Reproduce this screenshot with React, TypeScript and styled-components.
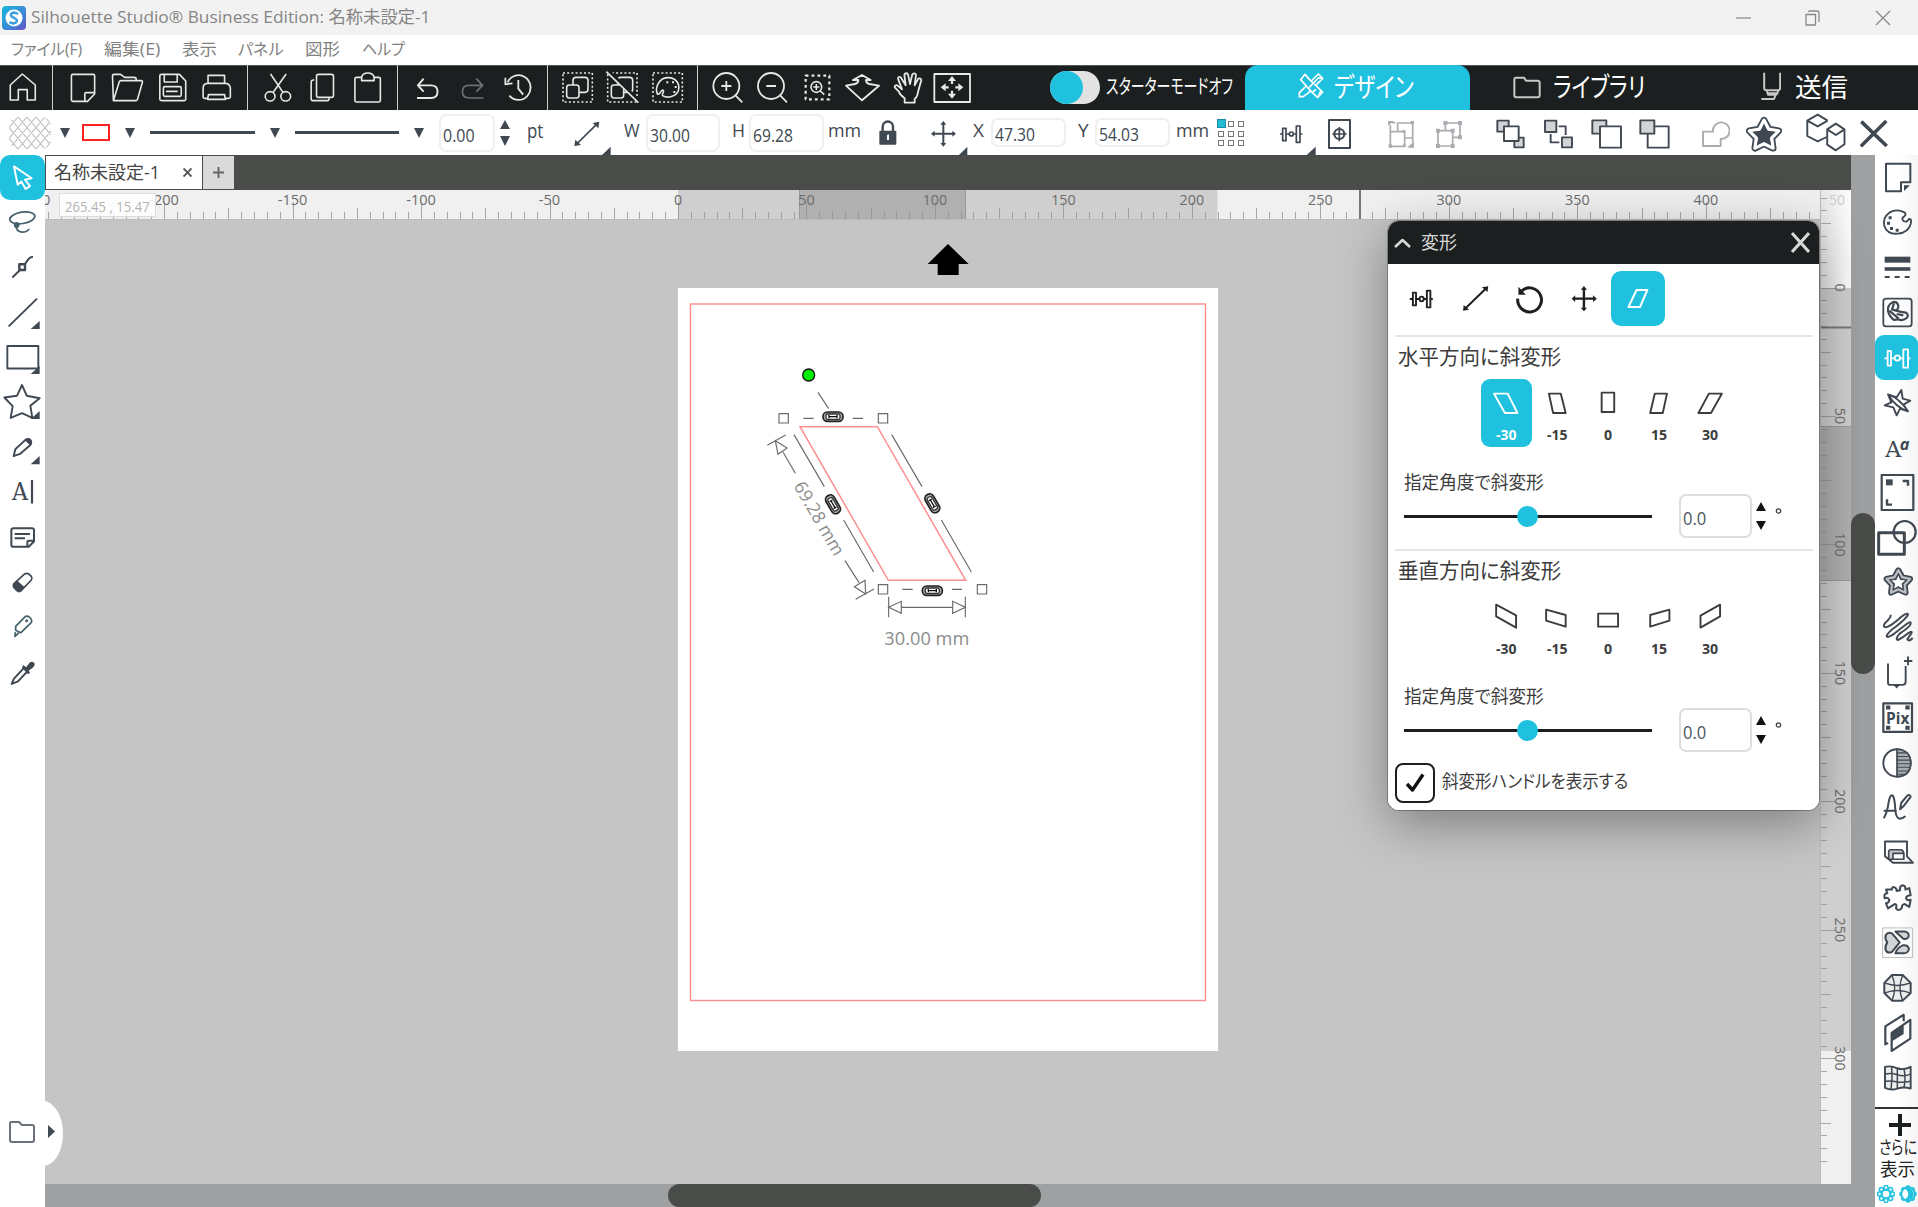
import React, { useLayoutEffect, useRef, useState } from 'react';
import styled, { createGlobalStyle } from 'styled-components';

const CYAN = '#1fc1df';
const DARK = '#1b1f20';
const INK = '#404852';

const GlobalStyle = createGlobalStyle`
  * { box-sizing: border-box; }
  body { margin: 0; overflow: hidden; background: #fff; }
  #root { font-family: 'Open Sans', 'Noto Sans CJK JP', sans-serif; font-feature-settings: 'palt'; color: #4a4a4a; }
`;

/* ---------- shared pieces ---------- */

const FitBox = styled.span<{ $w: number; $ml?: number; $size: number; $color?: string; $weight?: number; $dy?: number }>`
  display: block;
  flex: none;
  width: ${p => p.$w}px;
  margin-left: ${p => p.$ml ?? 0}px;
  margin-top: ${p => p.$dy ?? 0}px;
  font-size: ${p => p.$size}px;
  font-weight: ${p => p.$weight ?? 400};
  line-height: 1.3;
  color: ${p => p.$color ?? 'inherit'};
  white-space: nowrap;
`;
const FitInner = styled.span`
  display: inline-block;
  transform-origin: 0 50%;
`;

type FitProps = { w: number; size: number; ml?: number; color?: string; weight?: number; dy?: number; children: string };
/* Text condensed or widened to take exactly the given width. */
function Fit({ w, size, ml, color, weight, dy, children }: FitProps) {
  const ref = useRef<HTMLSpanElement>(null);
  const [k, setK] = useState(1);
  useLayoutEffect(() => {
    const n = ref.current ? ref.current.offsetWidth : 0;
    if (n) setK(w / n);
  }, [w, children]);
  return (
    <FitBox $w={w} $size={size} $ml={ml} $color={color} $weight={weight} $dy={dy}>
      <FitInner ref={ref} style={{ transform: `scaleX(${k})` }}>{children}</FitInner>
    </FitBox>
  );
}

const Svg = styled.svg<{ $ml?: number; $color?: string; $sw?: number }>`
  display: block;
  flex: none;
  margin-left: ${p => p.$ml ?? 0}px;
  color: ${p => p.$color ?? 'inherit'};
  fill: none;
  stroke: currentColor;
  stroke-width: ${p => p.$sw ?? 1.7};
  stroke-linejoin: round;
  & * { vector-effect: non-scaling-stroke; }
  & .f { fill: currentColor; stroke: none; }
  & .g { fill: #d2d4d6; }
  & .w { fill: #fff; }
  & text { fill: currentColor; stroke: none; }
`;
type GlyphProps = { w: number; h: number; vb: string; ml?: number; color?: string; sw?: number; children: React.ReactNode };
const Glyph = ({ w, h, vb, ml, color, sw, children }: GlyphProps) => (
  <Svg width={w} height={h} viewBox={vb} preserveAspectRatio="none" $ml={ml} $color={color} $sw={sw}>{children}</Svg>
);

/* ---------- title and menu ---------- */

const Window = styled.div`
  width: 1918px;
  height: 1207px;
  display: flex;
  flex-direction: column;
  overflow: hidden;
  background: #fff;
`;
const TitleBar = styled.header`
  height: 35px;
  flex: none;
  display: flex;
  align-items: center;
  padding: 0 27px 0 2px;
  background: #f2f2f2;
`;
const Spacer = styled.div`flex: 1;`;
const MenuBar = styled.nav`
  height: 30px;
  flex: none;
  display: flex;
  align-items: center;
  padding: 0 0 2px 11px;
  background: #fff;
`;

/* ---------- top toolbar ---------- */

const Toolbar = styled.div`
  height: 45px;
  flex: none;
  display: flex;
  background: ${DARK};
  color: #e8e8e8;
  box-shadow: inset 0 1px 0 #555;
`;
const ToolGroup = styled.div<{ $first?: boolean; $last?: boolean }>`
  display: flex;
  padding: 0 7px 0 ${p => (p.$first ? 0 : 7)}px;
  border-right: ${p => (p.$last ? 0 : 1)}px solid #d0d0d0;
`;
const Toggle = styled.div`
  width: 50px;
  height: 33px;
  margin: 6px 0 0 68px;
  border-radius: 17px;
  background: #e2e2e2;
  flex: none;
  &::before {
    content: '';
    display: block;
    width: 33px;
    height: 33px;
    border-radius: 50%;
    background: ${CYAN};
  }
`;
const ToggleLabel = styled.div`
  display: flex;
  align-items: center;
  margin-left: 6px;
  width: 139px;
`;
const ModeTab = styled.div<{ $active?: boolean; $pl: number; $w: number }>`
  display: flex;
  align-items: center;
  width: ${p => p.$w}px;
  padding-left: ${p => p.$pl}px;
  border-radius: 13px 13px 0 0;
  background: ${p => (p.$active ? CYAN : 'transparent')};
  color: #fff;
`;

const tb = (cell: number) => `${cell * 2.24} 195 100.8 135`;
const tc = (cell: number) => `${(cell - 550) * 3} 9 135 135`;
const TopIcon = ({ vb, color, children, sw = 1.6 }: { vb: string; color?: string; sw?: number; children: React.ReactNode }) => (
  <Glyph w={45} h={45} vb={vb} color={color} sw={sw}>{children}</Glyph>
);

function TopToolbar() {
  return (
    <Toolbar>
      <ToolGroup $first>
        <TopIcon vb={tb(0)}><path d="M23 300V255L50 222L79 255V300H61V269H41V300Z" /></TopIcon>
      </ToolGroup>
      <ToolGroup>
        <TopIcon vb={tb(60)}><path d="M163 223H209q3 0 3 4V282L196 304H163q-3 0-3-4V227q0-4 3-4ZM190 304V281q0-3 3-3H212" /></TopIcon>
        <TopIcon vb={tb(105)}><path d="M254 302L252 228q0-5 4-5H270L279 232H300q5 0 5 5V243M254 302L267 246q1-4 4-4H316q4 0 3 5L308 298q-1 4-4 4Z" /></TopIcon>
        <TopIcon vb={tb(150)}><path d="M362 223H402L416 243V298q0 4-3 4H362q-4 0-4-4V227q0-4 4-4ZM368 223V246H397V223M369 260H403q3 0 3 4V285q0 4-3 4H369q-3 0-3-4V264q0-4 3-4ZM372 274H398" /></TopIcon>
        <TopIcon vb={tb(195)}><path d="M466 250V226H503V250M466 295H458q-3 0-3-4V264q0-13 10-14H505q10 1 11 14V291q0 4-4 4H504M467 284H503L505 298H465Z" /></TopIcon>
      </ToolGroup>
      <ToolGroup>
        <TopIcon vb={tb(255)}><path d="M606 222L634 277M641 222L612 277" /><ellipse cx="605" cy="289" rx="11" ry="14" /><ellipse cx="640" cy="289" rx="11" ry="14" /></TopIcon>
        <TopIcon vb={tb(300)}><rect x="709" y="223" width="38" height="69" rx="5" /><path d="M704 240H702q-5 0-5 7V296q0 6 5 6H732q5 0 5-6V294" /></TopIcon>
        <TopIcon vb={tb(345)}><rect x="795" y="232" width="57" height="74" rx="4" /><path fill={DARK} d="M810 242V232q2-13 14-13q12 0 14 13V242Z" /></TopIcon>
      </ToolGroup>
      <ToolGroup>
        <TopIcon vb={tb(405)} sw={1.9}><path d="M949 236L936 256L949 275M936 256H965q15 0 15 17v4q0 17-15 17H934" /></TopIcon>
        <TopIcon vb={tb(450)} sw={1.7} color="#6d7172"><path d="M1067 236L1081 256L1067 275M1081 256H1051q-15 0-15 17v4q0 17 15 17H1083" /></TopIcon>
        <TopIcon vb={tb(495)} sw={1.8}><path d="M1137 247A27 37 0 1 1 1141 287M1132 233V253L1148 250M1161 240V266L1172 284" /></TopIcon>
      </ToolGroup>
      <ToolGroup>
        <TopIcon vb={tc(555)}><rect x="39" y="33" width="88" height="87" strokeDasharray="2 2.2" /><rect x="69" y="46" width="45" height="45" rx="9" /><rect x="50" y="69" width="37" height="39" rx="8" fill={DARK} /></TopIcon>
        <TopIcon vb={tc(600)}><rect x="173" y="33" width="88" height="87" strokeDasharray="2 2.2" /><rect x="203" y="46" width="45" height="45" rx="9" /><rect x="184" y="69" width="37" height="39" rx="8" fill={DARK} /><path stroke={DARK} strokeWidth="4" d="M174 27L268 119" /><path d="M169 29L265 122" /></TopIcon>
        <TopIcon vb={tc(645)}><rect x="309" y="33" width="88" height="87" strokeDasharray="2 2.2" /><path d="M322 96C314 78 327 48 352 47C382 46 390 70 385 86C378 104 352 110 338 101C333 97 344 90 340 85C334 80 330 100 322 96Z" /><path className="f" d="M349 58h6v6h-6zM366 58h6v6h-6zM374 72h6v6h-6zM370 87h6v6h-6z" /></TopIcon>
      </ToolGroup>
      <ToolGroup $last>
        <TopIcon vb={tc(705)} sw={1.8}><circle cx="529" cy="72" r="39" /><path d="M557 101L577 121M514 72H544M529 57V87" /></TopIcon>
        <TopIcon vb={tc(750)} sw={1.8}><circle cx="663" cy="72" r="39" /><path d="M691 101L711 121M649 72H678" /></TopIcon>
        <TopIcon vb={tc(795)}><rect x="767" y="41" width="71" height="71" strokeWidth="2.2" strokeDasharray="2.8 3.1" /><circle cx="799" cy="75" r="16" /><path d="M811 87L823 98M790 75H808M799 66V84" /></TopIcon>
        <TopIcon vb={tc(840)} sw={1.9}><path d="M888 71L915 66Q925 64 925 54H909L936 39L962 54H948Q948 64 958 66L987 71L936 115Z" /></TopIcon>
        <TopIcon vb={tc(885)} sw={1.8}><path d="M1064 122V109Q1050 100 1046 88L1034 76Q1034 68 1042 70L1056 82L1044 50Q1045 42 1052 46L1067 70L1063 38Q1068 30 1074 37L1080 66L1087 37Q1094 31 1098 38L1094 70L1105 50Q1112 47 1114 54L1104 90Q1103 104 1094 111V122Z" /></TopIcon>
        <TopIcon vb={tc(930)} sw={1.8}><rect x="1153" y="36" width="107" height="84" /><path strokeWidth="2.2" d="M1206 66V48M1206 86V104M1196 76H1178M1216 76H1234" /><path className="f" d="M1194 57L1206 42L1218 57ZM1194 95L1206 110L1218 95ZM1187 64L1172 76L1187 88ZM1225 64L1240 76L1225 88Z" /></TopIcon>
      </ToolGroup>
      <Toggle />
      <ToggleLabel><Fit w={127} size={20} color="#fff" dy={-2}>スターターモードオフ</Fit></ToggleLabel>
      <ModeTab $active $w={225} $pl={53}>
        <Glyph w={26} h={45} vb="84 9 78 135" sw={1.7}>
          <path d="M118 63L145 36L158 49L116 92L100 104H88V92Z" />
          <path fill={CYAN} d="M92 53L105 37L118 52L158 90L143 106L127 92Z" />
          <path fill={CYAN} strokeWidth="1.7" d="M118 76L145 48L158 49M128 90L138 82M146 102L153 84" />
        </Glyph>
        <Fit w={80} size={27} ml={10} dy={-1}>デザイン</Fit>
      </ModeTab>
      <ModeTab $w={248} $pl={43}>
        <Glyph w={28} h={45} vb="729 9 84 135" color="#c8c8c8" sw={2}><path d="M737 47H762L768 56H803Q809 56 809 62V99Q809 106 803 106H738Q733 106 733 100V53Q733 47 737 47Z" /></Glyph>
        <Fit w={92} size={27} ml={12} dy={-1}>ライブラリ</Fit>
      </ModeTab>
      <ModeTab $w={200} $pl={42}>
        <Glyph w={21} h={45} vb="1203 195 50 135" color="#c8c8c8" sw={2}><path d="M1213 218V264Q1213 271 1219 271H1245Q1251 271 1251 264V218M1219 280H1247M1219 271L1222 284H1242L1247 271M1206 297H1236L1240 286" /></Glyph>
        <Fit w={53} size={26} ml={14}>送信</Fit>
      </ModeTab>
    </Toolbar>
  );
}

/* ---------- option bar ---------- */

const OptionBar = styled.div`
  height: 45px;
  flex: none;
  display: flex;
  align-items: center;
  padding-left: 9px;
  background: #fff;
  color: ${INK};
`;
const Field = styled.div<{ $w: number; $h: number; $ml?: number; $border?: string; $pt?: number }>`
  flex: none;
  width: ${p => p.$w}px;
  height: ${p => p.$h}px;
  margin-left: ${p => p.$ml ?? 0}px;
  padding: ${p => p.$pt ?? 6}px 0 0 2px;
  display: flex;
  align-items: center;
  border: 2px solid ${p => p.$border ?? '#f0f0f0'};
  border-radius: 7px;
  background: #fff;
`;
const StrokeLine = styled.div<{ $ml: number; $w: number }>`
  flex: none;
  width: ${p => p.$w}px;
  height: 3px;
  margin-left: ${p => p.$ml}px;
  background: ${INK};
`;
const RedSwatch = styled.div`
  flex: none;
  width: 28px;
  height: 17px;
  margin-left: 12px;
  border: 2px solid #f22;
  background: #fff;
`;
const Anchors = styled.div`
  flex: none;
  margin-left: 7px;
  width: 30px;
  height: 30px;
  display: grid;
  grid-template-columns: repeat(3, 1fr);
  place-items: center;
`;
const Anchor = styled.i<{ $on?: boolean }>`
  width: ${p => (p.$on ? 9 : 6)}px;
  height: ${p => (p.$on ? 9 : 6)}px;
  border: 1px solid ${p => (p.$on ? '#178ea3' : '#777')};
  background: ${p => (p.$on ? '#25b9d3' : '#fff')};
`;
const Drop = ({ ml }: { ml: number }) => <Glyph w={10} h={10} ml={ml} vb="0 0 10 10"><path className="f" d="M0 0H10L5 10Z" /></Glyph>;

const hatch: string[] = [];
for (let i = -4; i < 6; i++) hatch.push(`M${i * 9} 0l27 32M${i * 9 + 27} 0l-27 32`);
const star = (cx: number, cy: number, R: number, r: number, ky = 1) =>
  'M' + Array.from({ length: 10 }, (_, i) => {
    const a = -Math.PI / 2 + (i * Math.PI) / 5;
    const q = i % 2 ? r : R;
    return `${(cx + q * Math.cos(a)).toFixed(1)} ${(cy + q * Math.sin(a) * ky).toFixed(1)}`;
  }).join('L') + 'Z';

function Options() {
  return (
    <OptionBar>
      <Glyph w={42} h={32} vb="0 0 42 32" color="#bdbdbd" sw={1.1}>
        <clipPath id="hatchClip"><rect width="42" height="32" rx="9" /></clipPath>
        <path clipPath="url(#hatchClip)" d={hatch.join('')} />
      </Glyph>
      <Drop ml={9} />
      <RedSwatch />
      <Drop ml={15} />
      <StrokeLine $ml={15} $w={105} />
      <Drop ml={15} />
      <StrokeLine $ml={15} $w={104} />
      <Drop ml={15} />
      <Field $w={56} $h={38} $ml={15}><Fit w={32} size={18}>0.00</Fit></Field>
      <Glyph w={10} h={26} ml={5} vb="0 0 10 26"><path className="f" d="M0 9L5 0L10 9ZM0 16H10L5 26Z" /></Glyph>
      <Fit w={16} size={20} ml={17} dy={-4}>pt</Fit>
      <Glyph w={37} h={45} ml={31} vb="72 144 111 135"><path d="M80 246L142 185" /><path className="f" d="M73 252L76 233L93 249ZM148 179L128 183L145 199ZM156 279L182 254V279Z" /></Glyph>
      <Fit w={16} size={19} ml={13} dy={-5}>W</Fit>
      <Field $w={74} $h={38} $ml={6}><Fit w={40} size={18}>30.00</Fit></Field>
      <Fit w={13} size={19} ml={12} dy={-5}>H</Fit>
      <Field $w={75} $h={38} $ml={4}><Fit w={40} size={18}>69.28</Fit></Field>
      <Fit w={33} size={19} ml={4} dy={-4}>mm</Fit>
      <Glyph w={18} h={45} ml={18} vb="987 144 54 135" sw={2.4}><rect className="f" x="988" y="206" width="51" height="42" rx="3" /><path d="M998 208V194a15.500 15.500 0 0 1 31 0V208" /><path d="M1013 220h1v14" stroke="#fff" strokeWidth="2" /></Glyph>
      <Glyph w={37} h={45} ml={34} vb="1143 144 111 135" sw={2}><path d="M1150 215H1212M1180 184V247" /><path className="f" d="M1171 188L1180 177L1189 188ZM1171 243L1180 254L1189 243ZM1154 206L1143 215L1154 224ZM1207 206L1218 215L1207 224ZM1227 279L1252 254V279Z" /></Glyph>
      <Fit w={11} size={19} ml={5} dy={-5}>X</Fit>
      <Field $w={75} $h={29} $ml={7} $pt={4}><Fit w={40} size={18}>47.30</Fit></Field>
      <Fit w={11} size={19} ml={12} dy={-5}>Y</Fit>
      <Field $w={75} $h={29} $ml={6} $pt={4}><Fit w={40} size={18}>54.03</Fit></Field>
      <Fit w={33} size={19} ml={6} dy={-4}>mm</Fit>
      <Anchors>{Array.from({ length: 9 }, (_, i) => <Anchor key={i} $on={i === 0} />)}</Anchors>
      <Glyph w={36} h={45} ml={34} vb="30 144 108 135"><path d="M30 216H38M48 216H57M71 216H79M90 216H97" /><rect x="38" y="199" width="10" height="37" /><circle cx="64" cy="216" r="6" /><rect x="79" y="192" width="11" height="49" /><path className="f" d="M110 279L137 254V279Z" /></Glyph>
      <Glyph w={23} h={45} ml={12} vb="174 144 69 135"><rect x="177" y="174" width="63" height="84" strokeWidth="2" /><circle cx="208" cy="216" r="15" strokeWidth="2.2" /><path d="M187 216H230M208 195V238" /></Glyph>
      <Glyph w={28} h={45} ml={36} vb="351 144 84 135" color="#a9acb0"><path d="M361 190V209H404V253H361V209M383 207V183H428V228H406M366 182H376M428 240V228" /><path className="f" d="M354 177H372L354 192ZM432 238V257H411ZM422 177h10v10h-10zM356 247h10v10h-10zM399 247h8v8h-8zM398 204h8v8h-8z" /></Glyph>
      <Glyph w={28} h={45} ml={20} vb="495 144 84 135" color="#a9acb0"><path d="M504 206H548V252H504ZM526 206V183H570V226H548" /><path className="f" d="M498 200h12v12h-12zM542 200h12v12h-12zM498 246h12v12h-12zM542 246h12v12h-12zM520 177h12v12h-12zM564 177h12v12h-12zM564 220h12v12h-12z" /></Glyph>
      <Glyph w={29} h={45} ml={33} vb="678 144 87 135" sw={1.9}><rect className="g" x="682" y="176" width="34" height="33" /><rect className="g" x="733" y="227" width="28" height="29" /><rect className="w" x="702" y="193" width="44" height="44" /></Glyph>
      <Glyph w={29} h={45} ml={19} vb="822 144 87 135" sw={1.9}><rect className="g" x="825" y="176" width="34" height="34" /><rect className="g" x="876" y="226" width="30" height="30" /><path d="M866 193H887V219M842 216V241H868" /></Glyph>
      <Glyph w={31} h={45} ml={18} vb="963 144 93 135" sw={1.9}><rect className="g" x="967" y="175" width="42" height="40" /><rect className="w" x="990" y="193" width="63" height="64" /></Glyph>
      <Glyph w={31} h={45} ml={17} vb="1107 144 93 135" sw={1.9}><rect className="w" x="1133" y="193" width="63" height="64" /><rect className="g" x="1111" y="175" width="42" height="40" /></Glyph>
      <Glyph w={29} h={45} ml={31} vb="1293 144 87 135" color="#a9acb0" sw={1.9}><path d="M1329 209H1299V252H1352V231A25 25 0 1 0 1329 209Z" /></Glyph>
      <Glyph w={36} h={45} ml={16} vb="1428 144 108 135" sw={7}>
        <path d={star(1482, 221, 46, 24)} />
        <path stroke="#fff" strokeWidth="3.4" d={star(1482, 221, 46, 24)} />
        <path className="f" d={star(1482, 221, 37, 16)} />
      </Glyph>
      <Glyph w={40} h={45} ml={24} vb="1309 330 92.500 135" sw={1.9}><path d="M1359 362L1336 344L1312 362V408L1336 424L1357 411M1312 362L1336 379L1359 362" /><path className="w" d="M1378 371L1398 388V433L1378 451L1358 434V388ZM1358 388L1378 405L1398 388" /></Glyph>
      <Glyph w={28} h={45} ml={14} vb="1434 330 65 135" sw={3.6}><path d="M1437 365L1496 438M1495 363L1436 439" /></Glyph>
    </OptionBar>
  );
}

/* ---------- side tools ---------- */

const Body = styled.div`
  flex: 1;
  min-height: 0;
  display: flex;
`;
const LeftTools = styled.aside`
  position: relative;
  z-index: 3;
  width: 45px;
  flex: none;
  display: flex;
  flex-direction: column;
  background: #fff;
  color: ${INK};
`;
const ToolCell = styled.div<{ $on?: boolean; $w: number; $r: number }>`
  width: ${p => p.$w}px;
  height: 45px;
  flex: none;
  border-radius: ${p => p.$r}px;
  background: ${p => (p.$on ? CYAN : 'transparent')};
  color: ${p => (p.$on ? '#fff' : 'inherit')};
`;
const FolderPull = styled.div`
  position: absolute;
  left: 0;
  top: 946px;
  width: 63px;
  height: 65px;
  display: flex;
  align-items: center;
  padding: 0 0 4px 8px;
  background: #fff;
  border-radius: 0 20px 20px 0 / 0 50% 50% 0;
`;

const leftIcons: React.ReactNode[] = [
  <path key="0" d="M42 46L95 79L75 83L90 101L77 109L64 88L53 97Z" strokeWidth="2" />,
  <g key="1" stroke="#45606b"><ellipse cx="67" cy="190" rx="38" ry="16" transform="rotate(-8 67 190)" /><path d="M47 208Q48 229 66 230Q80 230 88 221" /><circle cx="50" cy="210" r="6" fill="#45606b" /></g>,
  <g key="2"><path d="M37 357L60 336M74 320L86 305Q91 299 99 299" strokeWidth="2" /><rect x="58" y="320" width="17" height="16" strokeWidth="2.4" /></g>,
  <g key="3"><path d="M26 494L111 416" strokeWidth="1.9" /><path className="f" d="M92 501L119 479V501Z" /></g>,
  <g key="4"><rect x="22" y="549" width="93" height="63" strokeWidth="1.9" /><path className="f" d="M92 627L119 605V627Z" /></g>,
  <g key="5"><path strokeWidth="1.9" d="M66 658L80 688L119 695L91 716L97 750L66 737L32 750L38 717L13 693L51 688Z" /><path className="f" d="M92 753L119 731V753Z" /></g>,
  <g key="6"><path strokeWidth="1.9" d="M41 857L46 838L77 811Q84 807 90 811Q97 818 91 826L60 851Z" /><path className="f" d="M74 813Q84 804 92 810Q99 818 92 828ZM92 880L119 857V880Z" /></g>,
  <g key="7"><text x="36" y="981" fontFamily="'DejaVu Serif', serif" fontSize="66" textLength="48" lengthAdjust="spacingAndGlyphs">A</text><path strokeWidth="2.2" d="M96 924V990" /></g>,
  <path key="8" strokeWidth="2" d="M40 1059H96Q102 1059 102 1065V1096L86 1111H40Q34 1111 34 1105V1065Q34 1059 40 1059ZM82 1111V1098Q82 1094 86 1094H102M44 1075H90M44 1087H75" />,
  <g key="9"><path d="M42 1214L74 1187Q80 1184 86 1187L94 1194Q98 1199 94 1204L62 1235Q56 1238 51 1234L41 1224Q38 1218 42 1214Z" /><path className="f" d="M40 1216L52 1206L74 1224L62 1235Q56 1238 51 1234L41 1224Z" /></g>,
  <g key="10" stroke="#45606b"><path d="M47 1334L74 1308Q80 1303 87 1307L94 1314Q97 1320 92 1325L62 1352L47 1345ZM46 1350L45 1362L56 1352" /><circle cx="80" cy="1318" r="2" /></g>,
  <g key="11"><path d="M35 1495L42 1480L72 1450L82 1460L54 1488Z" strokeWidth="2" /><path className="f" d="M70 1442L78 1448L90 1434Q100 1430 104 1438Q105 1446 96 1451L86 1458L90 1464L84 1468L66 1450Z" /></g>,
];

const RightTools = styled.aside`
  width: 43px;
  flex: none;
  display: flex;
  flex-direction: column;
  background: linear-gradient(90deg, #fff 55%, #f4f4f4);
  color: ${INK};
`;
const More = styled.div`
  margin-top: 7px;
  border-top: 2px solid #333;
  display: flex;
  flex-direction: column;
  padding-top: 5px;
  color: #222;
`;
const MoreRow = styled.div<{ $h: number }>`
  height: ${p => p.$h}px;
  flex: none;
  display: flex;
  align-items: center;
`;

const rightIcons: React.ReactNode[] = [
  <g key="0"><path strokeWidth="2" d="M258 41V124H303V97H331V41Z" /><path className="f" d="M312 123V106H330Z" /></g>,
  <g key="1"><path strokeWidth="1.9" d="M313 187Q290 175 268 188Q247 203 253 228Q262 254 294 251Q325 248 332 222Q336 205 327 207Q320 219 311 213Q302 205 313 199Q320 192 313 187Z" /><path className="f" d="M266 199h9v9h-9zM261 215h9v9h-9zM270 231h9v9h-9zM287 236h9v9h-9z" /></g>,
  <g key="2"><path strokeWidth="6" d="M254 329H331" /><path strokeWidth="3.600" d="M254 357H331" /><path strokeWidth="1.8" strokeDasharray="5 5" d="M254 381H331" /></g>,
  <g key="3"><rect x="250" y="446" width="85" height="83" rx="8" strokeWidth="1.8" /><path strokeWidth="2.2" d="M276 458Q288 452 294 464Q298 474 288 482Q302 486 318 488Q328 496 320 504Q308 514 294 508L282 510Q268 500 264 484Q262 466 276 458ZM282 460L276 478L288 482M268 482L296 506M290 492L310 496" /></g>,
  <g key="4" strokeWidth="1.8"><path d="M253 625H263M273 625H284M300 625H310M324 625H331" /><rect x="263" y="603" width="10" height="44" /><circle cx="292" cy="624" r="8" /><rect x="310" y="598" width="14" height="55" /></g>,
  <path key="5" strokeWidth="1.9" d="M304 720L308 746L331 752L310 764L324 784L300 776L290 796L280 772L254 766L274 757L264 733L290 742ZM264 733Q298 744 324 784Q286 772 264 733Z" />,
  <g key="6"><text x="256" y="920" fontFamily="'DejaVu Serif', serif" fontSize="66" textLength="48" lengthAdjust="spacingAndGlyphs">A</text><text x="299" y="901" fontFamily="'Open Sans', sans-serif" fontStyle="italic" fontWeight="700" fontSize="46" textLength="29" lengthAdjust="spacingAndGlyphs">a</text></g>,
  <g key="7"><rect x="245" y="975" width="95" height="105" strokeWidth="2.2" /><rect className="f" x="258" y="988" width="20" height="18" /><path strokeWidth="2.4" d="M308 993H324V1007M261 1048V1064H276" /></g>,
  <g key="8"><rect x="236" y="1148" width="77" height="65" strokeWidth="3" /><circle cx="314" cy="1146" r="33" strokeWidth="2.2" /></g>,
  <g key="9"><path strokeWidth="6" d={star(295, 1298, 37, 20)} /><path stroke="#b9bcc0" strokeWidth="2.4" d={star(295, 1298, 37, 20)} /><path className="w" strokeWidth="1.2" d={star(295, 1298, 26, 12)} /></g>,
  <path key="10" strokeWidth="2" d="M272 1394Q274 1402 256 1418Q246 1432 258 1432Q276 1426 304 1400Q322 1386 324 1394Q320 1404 290 1428Q262 1448 260 1458Q262 1466 284 1450L320 1422Q334 1412 332 1422Q328 1432 300 1450Q284 1466 294 1470Q308 1464 324 1450Q338 1440 334 1450Q324 1464 322 1468Q328 1476 338 1464" />,
  <g key="11"><path strokeWidth="1.9" d="M264 65V118Q264 124 270 124H308Q317 124 317 115V72M312 58H337M324 46V70" /><path className="f" d="M280 124L290 134L300 124Z" /></g>,
  <g key="12"><rect x="250" y="175" width="86" height="79" strokeWidth="2.2" /><text x="258" y="231" fontFamily="'Open Sans', sans-serif" fontWeight="700" fontSize="42" textLength="70" lengthAdjust="spacingAndGlyphs">Pix</text><path className="f" d="M258 181h13v11h-13zM316 181h13v11h-13zM258 237h13v11h-13zM316 237h13v11h-13z" /></g>,
  <g key="13"><ellipse cx="291" cy="340" rx="41" ry="38" strokeWidth="1.9" /><path d="M291 302Q332 304 332 340Q332 376 291 378Z" fill="#a8acb1" /><path strokeWidth="1.1" d="M291 312H320M291 322H328M291 332H332M291 342H332M291 352H332M291 362H326M291 371H316" /></g>,
  <path key="14" strokeWidth="2" d="M251 493Q262 476 266 448Q270 426 278 430Q284 436 286 470Q288 494 300 494Q312 492 316 487M251 472H290M300 468L304 450L322 430Q330 426 332 434L312 458Z" />,
  <g key="15"><path strokeWidth="1.9" d="M255 557H321V598L339 616H279L255 598Z" /><path strokeWidth="1.6" fill="#c4c7ca" d="M266 606V586Q266 580 272 580H303Q311 582 311 590V606Z" /><path className="w" strokeWidth="1.6" d="M279 606V590H311V606Z" /></g>,
  <path key="16" strokeWidth="2" d="M276 690Q276 680 284 684Q290 686 290 694L300 692Q298 680 308 678Q318 680 316 690L328 686L332 706Q320 706 318 714Q322 722 332 718L328 738L314 730Q304 732 306 740Q296 752 288 742Q292 730 284 730L264 742L258 728Q268 726 268 718Q262 710 254 714Q250 700 262 700L258 690Z" />,
  <g key="17"><rect x="248" y="796" width="90" height="82" stroke="#bbb" strokeWidth="1" /><path className="g" strokeWidth="2" d="M299 836L276 862Q263 868 257 857Q254 846 262 836Q254 826 257 816Q263 806 276 811Z" /><path className="g" strokeWidth="1.9" d="M286 806H314Q328 808 326 819Q322 829 310 826ZM286 866Q292 850 308 844Q324 842 327 854Q324 866 312 866Z" /></g>,
  <g key="18"><path strokeWidth="2" d="M276 926H308L332 948V976L308 997H276L253 976V948Z" fill="#eceded" /><path strokeWidth="1.4" d="M276 926Q292 962 276 997M308 926Q292 962 308 997M253 948Q292 962 332 948M253 976Q292 962 332 976" /></g>,
  <g key="19"><path strokeWidth="2.2" d="M311 1054V1036L256 1068V1118L264 1114M275 1136V1086L331 1050V1102Z" /><path className="f" d="M275 1110V1084L311 1061V1089Z" /></g>,
  <g key="20"><path strokeWidth="1.9" d="M255 1180Q274 1176 292 1184Q312 1190 332 1180V1240Q312 1234 292 1240Q274 1246 255 1238Z" fill="#eceded" /><path strokeWidth="1.5" d="M255 1200Q274 1196 292 1202Q312 1208 332 1200M255 1220Q274 1218 292 1222Q312 1224 332 1220M275 1178Q278 1210 273 1243M292 1184Q292 1210 292 1240M312 1186Q318 1210 312 1237" /></g>,
];

/* ---------- workspace ---------- */

const Center = styled.main`
  width: 1806px;
  flex: none;
  display: flex;
  flex-direction: column;
`;
const TabStrip = styled.div`
  height: 35px;
  flex: none;
  display: flex;
  background: #4a4c4a;
  padding: 1px 0;
`;
const DocTab = styled.div`
  width: 156px;
  margin-left: 1px;
  display: flex;
  align-items: center;
  padding-left: 8px;
  background: #fff;
`;
const AddTab = styled.div`
  width: 31px;
  margin-left: 1px;
  display: grid;
  place-items: center;
  background: #dadada;
`;
const Workspace = styled.div`
  position: relative;
  height: 994px;
  flex: none;
  display: flex;
`;
const CanvasColumn = styled.div`
  width: 1775px;
  display: flex;
  flex-direction: column;
`;
const Drawing = styled.svg`
  display: block;
  flex: none;
`;
const Coords = styled.div`
  position: absolute;
  left: 14px;
  top: 3px;
  width: 97px;
  height: 24px;
  padding: 3px 0 0 5px;
  border: 1px solid #ddd;
  background: rgba(255, 255, 255, 0.85);
`;
const HScroll = styled.div`
  height: 23px;
  flex: none;
  padding-left: 623px;
  background: #9fa0a2;
`;
const HThumb = styled.div`
  width: 373px;
  height: 23px;
  border-radius: 12px;
  background: #4a4c4a;
`;
const VScroll = styled.div`
  width: 24px;
  flex: none;
  padding-top: 358px;
  background: #9fa0a2;
`;
const VThumb = styled.div`
  width: 24px;
  height: 161px;
  border-radius: 12px;
  background: #4a4c4a;
`;

const MM = 2.5695;
const X0 = 633;
function HRuler() {
  const ticks: string[] = [];
  for (let i = -50; i <= 90; i++) {
    const x = Math.round(X0 + i * 5 * MM) + 0.5;
    const len = i % 10 === 0 ? 17 : i % 5 === 0 ? 11 : 7;
    ticks.push(`M${x} 29V${29 - len}`);
  }
  return (
    <Drawing width={1775} height={30} fontFamily="'Open Sans', sans-serif" fontSize="15">
      <rect width="1775" height="30" fill="#f0f0f0" />
      <rect x="633" width="539.500" height="30" fill="#cfcfcf" />
      <rect x="754" width="167" height="30" fill="#b0b0b0" />
      <path d="M754.500 0V30M920.500 0V30" stroke="#999" />
      <path d={ticks.join('')} stroke="#8f8f8f" opacity="0.75" />
      <path d="M1315 0V30" stroke="#777" strokeWidth="2" />
      {Array.from({ length: 14 }, (_, i) => i * 50 - 250).map(v => {
        const w = String(Math.abs(v)).length * 8.2 + (v < 0 ? 5 : 0);
        return <text key={v} x={X0 + v * MM - w / 2} y="15" textLength={w} lengthAdjust="spacingAndGlyphs" fill="#6c6c6c">{v}</text>;
      })}
      <path d="M0 29.500H1775" stroke="#bbb" />
    </Drawing>
  );
}

function VRuler() {
  const ticks: string[] = [];
  for (let i = -7; i <= 68; i++) {
    const y = Math.round(97.5 + i * 5 * MM) + 0.5;
    const len = i % 10 === 0 ? 16 : i % 5 === 0 ? 11 : 7;
    ticks.push(`M1 ${y}H${len}`);
  }
  return (
    <Drawing width={31} height={994} fontFamily="'Open Sans', sans-serif" fontSize="15">
      <defs><linearGradient id="vr" x2="1"><stop stopColor="#e6e6e6" /><stop offset="1" stopColor="#fcfcfc" /></linearGradient></defs>
      <rect width="31" height="994" fill="#f0f0f0" />
      <rect width="31" height="98" fill="url(#vr)" />
      <rect y="98" width="31" height="763" fill="#cfcfcf" />
      <rect y="237" width="31" height="153" fill="#b0b0b0" />
      <path d="M0 236.500H31M0 390.500H31" stroke="#999" />
      <path d={ticks.join('')} stroke="#8f8f8f" opacity="0.75" />
      <path d="M0 137.500H31" stroke="#777" strokeWidth="2" />
      <path d="M0.500 0V994" stroke="#bbb" />
      <text x="9" y="15" fill="#ccc" textLength="16" lengthAdjust="spacingAndGlyphs">50</text>
      {[0, 50, 100, 150, 200, 250, 300].map(v => {
        const w = String(v).length * 8.2;
        return <text key={v} transform={`translate(14.500 ${97.5 + v * MM - w / 2}) rotate(90)`} textLength={w} lengthAdjust="spacingAndGlyphs" fill="#6c6c6c">{v}</text>;
      })}
    </Drawing>
  );
}

const Grip = ({ x, y, r }: { x: number; y: number; r?: number }) => (
  <g transform={`translate(${x} ${y}) rotate(${r ?? 0})`}>
    <rect x="-30" y="-14" width="60" height="28" rx="13" fill="#aaa" stroke="#222" strokeWidth="5" />
    <rect x="-21" y="-8" width="42" height="16" rx="5" fill="#fff" stroke="#333" strokeWidth="4" />
    <path d="M-14 0H14M-12 -5V5M12 -5V5" stroke="#111" strokeWidth="4" />
  </g>
);

function Canvas() {
  return (
    <Drawing width={1775} height={964} viewBox="45 220 1775 964" fontFamily="'Open Sans', sans-serif">
      <rect x="45" y="220" width="1775" height="964" fill="#c5c5c5" />
      <rect x="678" y="288" width="540" height="763" fill="#fff" />
      <rect x="690.500" y="304" width="515" height="696.500" fill="none" stroke="#ff8c8c" strokeWidth="1.400" />
      <g transform="translate(740 230) scale(0.33333)" fill="none" stroke="#6b6b6b" strokeWidth="3.500">
        <path d="M624 42L686 102H656V135H593V102H563Z" fill="#000" stroke="none" />
        <path d="M180 590H412L677 1051H445Z" stroke="#ff8f8f" strokeWidth="4.500" />
        <circle cx="206" cy="435" r="18" fill="#0e0" stroke="#111" strokeWidth="4" />
        <path d="M234 487L266 536M190 565H221M338 565H369M487 1078H518M636 1078H666" />
        <path d="M162 614L253 770M311 870L401 1026M455 614L546 770M604 870L694 1026" />
        <path d="M117 551h28v28h-28zM415 551h28v28h-28zM415 1064h28v28h-28zM712 1064h28v28h-28z" />
        <Grip x={279} y={560} />
        <Grip x={577} y={1082} />
        <Grip x={279} y={823} r={60} />
        <Grip x={577} y={820} r={60} />
        <path d="M82 646L137 615M129 666L166 730M106 632L141 654L114 673ZM347 1108L402 1077M315 992L357 1058M377 1092L343 1070L375 1051Z" />
        <path d="M446 1100V1162M676 1100V1162M484 1132H638M446 1132L484 1114V1150ZM676 1132L638 1114V1150Z" />
        <text x="433" y="1246" fontSize="54" textLength="255" lengthAdjust="spacingAndGlyphs" fill="#8c8c8c" stroke="none">30.00 mm</text>
        <text transform="translate(160 768) rotate(60)" fontSize="54" textLength="246" lengthAdjust="spacingAndGlyphs" fill="#8c8c8c" stroke="none">69.28 mm</text>
      </g>
    </Drawing>
  );
}

/* ---------- transform panel ---------- */

const Panel = styled.section`
  position: absolute;
  left: 1343px;
  top: 31px;
  width: 431px;
  height: 589px;
  display: flex;
  flex-direction: column;
  border-radius: 11px;
  background: #fff;
  overflow: hidden;
  color: #3c3c3c;
`;
const PanelShadow = styled(Panel)`
  box-shadow: 0 0 0 1px rgba(0, 0, 0, 0.28), 0 14px 50px rgba(0, 0, 0, 0.36);
  overflow: visible;
`;
const PanelHeader = styled.div`
  height: 43px;
  flex: none;
  display: flex;
  align-items: center;
  padding-left: 6px;
  background: ${DARK};
  color: #d8d8d8;
`;
const PanelTabs = styled.div`
  display: flex;
  height: 71px;
  flex: none;
  padding: 7px 0 0 6px;
`;
const PanelTab = styled.div<{ $on?: boolean }>`
  width: 54.2px;
  height: 55px;
  border-radius: 10px;
  background: ${p => (p.$on ? CYAN : 'transparent')};
  color: ${p => (p.$on ? '#fff' : '#1d1f20')};
`;
const Section = styled.div`
  height: 214px;
  flex: none;
  display: flex;
  flex-direction: column;
`;
const Divider = styled.div`
  height: 2px;
  flex: none;
  margin: 0 6px 0 7px;
  background: #e6e6e6;
`;
const Heading = styled.div`
  height: 42px;
  flex: none;
  display: flex;
  align-items: center;
  padding: 0 0 2px 10px;
`;
const Presets = styled.div`
  height: 68px;
  flex: none;
  display: flex;
  padding-left: 92.5px;
`;
const Preset = styled.div<{ $on?: boolean }>`
  width: 51px;
  height: 68px;
  display: flex;
  flex-direction: column;
  align-items: center;
  border-radius: 9px;
  background: ${p => (p.$on ? CYAN : 'transparent')};
  color: ${p => (p.$on ? '#fff' : '#3c3c3c')};
`;
const SubLabel = styled.div`
  height: 25px;
  flex: none;
  margin-top: 22px;
  padding: 3px 0 0 16px;
  display: flex;
  align-items: center;
`;
const SliderRow = styled.div`
  height: 44px;
  flex: none;
  display: flex;
  align-items: center;
  padding-left: 16px;
`;
const Track = styled.div`
  width: 248px;
  height: 3px;
  display: flex;
  align-items: center;
  padding-left: 112.5px;
  background: #1b1f20;
  &::before {
    content: '';
    flex: none;
    width: 21px;
    height: 21px;
    border-radius: 50%;
    background: ${CYAN};
  }
`;
const CheckRow = styled.div`
  display: flex;
  align-items: center;
  padding-left: 7px;
`;
const CheckBox = styled.div`
  width: 40px;
  height: 40px;
  display: grid;
  place-items: center;
  border: 2.5px solid #1b1f20;
  border-radius: 8px;
`;

const tabIcons: React.ReactNode[] = [
  <g key="0" strokeWidth="1.9"><path d="M115 267H124M133 267H142M156 267H164M174 267H181" /><rect x="124" y="248" width="9" height="38" /><ellipse cx="149" cy="267" rx="6" ry="7" /><rect x="164" y="242" width="10" height="50" /></g>,
  <g key="1"><path strokeWidth="2" d="M273 297L335 234" /><path className="f" d="M268 302L270 285L285 299ZM340 229L322 232L338 246Z" /></g>,
  <g key="2" strokeWidth="3"><path d="M436 243A34 36 0 1 1 425 266" /><path className="f" d="M427 230V254H448Z" /></g>,
  <g key="3" strokeWidth="2.4"><path d="M584 266H642M612 236V296" /><path className="f" d="M603 239L612 228L621 239ZM603 293L612 304L621 293ZM587 256L577 266L587 276ZM638 256L649 266L638 276Z" /></g>,
  <path key="4" strokeWidth="2" d="M763 240H794L773 291H740Z" />,
];
const hShapes = ['M355 551H394L422 609H386Z', 'M512 551H546L560 609H524Z', 'M663 548H699V606H663Z', 'M815 551H850L838 609H802Z', 'M970 551H1007L976 609H940Z'];
const vShapes = ['M361 224V259L418 293V256Z', 'M504 239V272L560 290V255Z', 'M653 251H710V290H653Z', 'M802 255V290L857 272V239Z', 'M946 257V293L1002 259V224Z'];
const angles = ['-30', '-15', '0', '15', '30'];

function SkewSection({ title, shapes, top, active }: { title: string; shapes: string[]; top: number; active?: number }) {
  return (
    <Section>
      <Divider />
      <Heading><Fit w={163} size={21}>{title}</Fit></Heading>
      <Presets>
        {angles.map((a, i) => (
          <Preset key={a} $on={i === active}>
            <Glyph w={51} h={45} vb={`${317.6 + 146 * i} ${top} 146 135`} sw={1.9}><path d={shapes[i]} /></Glyph>
            <Fit w={a.length === 3 ? 20.5 : a.length === 2 ? 16 : 8.5} size={15} weight={700} dy={1}>{a}</Fit>
          </Preset>
        ))}
      </Presets>
      <SubLabel><Fit w={140} size={18}>指定角度で斜変形</Fit></SubLabel>
      <SliderRow>
        <Track />
        <Field $w={73} $h={44} $ml={27} $border="#dedede"><Fit w={23} size={18} color="#4c5560">0.0</Fit></Field>
        <Glyph w={10} h={30} ml={4} vb="0 0 10 30" color="#111"><path className="f" d="M0 10L5 1L10 10ZM0 20H10L5 29Z" /></Glyph>
        <Glyph w={7} h={44} ml={9} vb="0 0 7 44" sw={1.200}><circle cx="3.500" cy="17" r="2.200" /></Glyph>
      </SliderRow>
    </Section>
  );
}

function TransformPanel() {
  return (
    <>
      <PanelShadow />
      <Panel>
        <PanelHeader>
          <Glyph w={17} h={10} vb="0 0 17 10" sw={2.6}><path d="M1 9L8.500 2L16 9" /></Glyph>
          <Fit w={36} size={18} ml={10}>変形</Fit>
          <Glyph w={19} h={21} ml={334} vb="0 0 19 21" sw={3}><path d="M1 1L18 20M18 1L1 20" /></Glyph>
        </PanelHeader>
        <PanelTabs>
          {tabIcons.map((ic, i) => (
            <PanelTab key={i} $on={i === 4}><Glyph w={54.2} h={55} vb={`${70 + 155 * i} 183 155 165`}>{ic}</Glyph></PanelTab>
          ))}
        </PanelTabs>
        <SkewSection title="水平方向に斜変形" shapes={hShapes} top={507} active={0} />
        <SkewSection title="垂直方向に斜変形" shapes={vShapes} top={189} />
        <CheckRow>
          <CheckBox><Glyph w={20} h={20} vb="0 0 20 20" sw={3.4} color="#111"><path d="M2 11L7.500 17L18 1.500" /></Glyph></CheckBox>
          <Fit w={186} size={18} ml={7} dy={-2}>斜変形ハンドルを表示する</Fit>
        </CheckRow>
      </Panel>
    </>
  );
}

/* ---------- application ---------- */

const gear = (r: number) => Array.from({ length: 8 }, (_, i) => {
  const a = (i * Math.PI) / 4;
  return <circle key={i} cx={9 + r * Math.cos(a)} cy={9 + r * Math.sin(a)} r="2" />;
});

export default function App() {
  return (
    <Window>
      <GlobalStyle />
      <TitleBar>
        <Glyph w={24} h={24} vb="0 0 24 24">
          <defs><linearGradient id="logo" x2="1" y2="1"><stop stopColor="#18b6dc" /><stop offset="0.600" stopColor="#3c86d6" /><stop offset="1" stopColor="#6a4fc4" /></linearGradient></defs>
          <rect width="24" height="24" rx="4" fill="url(#logo)" stroke="none" />
          <circle cx="12" cy="12" r="8.500" fill="#fff" stroke="none" />
          <path d="M16 8Q12 5.500 9.500 7.500Q7.500 10 12 11.800Q16.500 14 14 16.500Q11 18.500 7.500 16" stroke="#3d9fe0" strokeWidth="2.600" />
        </Glyph>
        <Fit w={400} size={17} ml={5} color="#858585">Silhouette Studio® Business Edition: 名称未設定-1</Fit>
        <Spacer />
        <Glyph w={15} h={16} vb="0 0 15 16" color="#888" sw={1.2}><path d="M0 8H15" /></Glyph>
        <Glyph w={15} h={16} ml={54} vb="0 0 15 16" color="#888" sw={1.3}><path d="M1 4.500h9.500v10.500h-9.500zM3.500 2q0-1 1-1H12q2 0 2 2V12" /></Glyph>
        <Glyph w={16} h={16} ml={55} vb="0 0 16 16" color="#888" sw={1.3}><path d="M1 1L15 15M15 1L1 15" /></Glyph>
      </TitleBar>
      <MenuBar>
        <Fit w={71} size={16} color="#808080">ファイル(F)</Fit>
        <Fit w={56} size={16} ml={22} color="#808080">編集(E)</Fit>
        <Fit w={35} size={16} ml={22} color="#808080">表示</Fit>
        <Fit w={45} size={16} ml={21} color="#808080">パネル</Fit>
        <Fit w={35} size={16} ml={22} color="#808080">図形</Fit>
        <Fit w={43} size={16} ml={22} color="#808080">ヘルプ</Fit>
      </MenuBar>
      <TopToolbar />
      <Options />
      <Body>
        <LeftTools>
          {leftIcons.map((ic, i) => (
            <ToolCell key={i} $w={45} $r={10} $on={i === 0}><Glyph w={45} h={45} vb={`0 ${14 + 126 * i} 135 126`}>{ic}</Glyph></ToolCell>
          ))}
          <FolderPull>
            <Glyph w={28} h={24} vb="0 0 28 24" color="#6a717a" sw={2}><path d="M3 2H11L14 5H24Q26 5 26 7V20Q26 22 24 22H4Q2 22 2 20V4Q2 2 3 2Z" /></Glyph>
            <Glyph w={7} h={13} ml={12} vb="0 0 7 13"><path className="f" d="M0 0L7 6.500L0 13Z" /></Glyph>
          </FolderPull>
        </LeftTools>
        <Center>
          <TabStrip>
            <DocTab>
              <Fit w={106} size={18} color="#444">名称未設定-1</Fit>
              <Glyph w={9} h={9} ml={23} vb="0 0 9 9" color="#555" sw={1.9}><path d="M0.500 0.500L8.500 8.500M8.500 0.500L0.500 8.500" /></Glyph>
            </DocTab>
            <AddTab><Glyph w={11} h={11} vb="0 0 11 11" color="#666" sw={1.9}><path d="M5.500 0V11M0 5.500H11" /></Glyph></AddTab>
          </TabStrip>
          <Workspace>
            <CanvasColumn>
              <HRuler />
              <Canvas />
            </CanvasColumn>
            <VRuler />
            <Coords><Fit w={85} size={15} color="#b4b4b4">265.45 , 15.47</Fit></Coords>
            <TransformPanel />
          </Workspace>
          <HScroll><HThumb /></HScroll>
        </Center>
        <VScroll><VThumb /></VScroll>
        <RightTools>
          {rightIcons.map((ic, i) => (
            <ToolCell key={i} $w={43} $r={9} $on={i === 4}>
              <Glyph w={43} h={45} vb={i < 11 ? `225 ${15 + 135 * i} 129 135` : `225 ${27.7 + 124.4 * (i - 11)} 129 124.4`}>{ic}</Glyph>
            </ToolCell>
          ))}
          <More>
            <MoreRow $h={22}><Glyph w={22} h={22} ml={14} vb="0 0 22 22" sw={4} color="#1b1f20"><path d="M11 0V22M0 11H22" /></Glyph></MoreRow>
            <MoreRow $h={24}><Fit w={38} size={18} ml={4}>さらに</Fit></MoreRow>
            <MoreRow $h={20}><Fit w={35} size={18} ml={5}>表示</Fit></MoreRow>
            <MoreRow $h={27}>
              <Glyph w={18} h={18} ml={2} vb="0 0 18 18" color={CYAN} sw={1.500}>{gear(6.5)}<circle cx="9" cy="9" r="4" className="w" /></Glyph>
              <Glyph w={18} h={18} ml={4} vb="0 0 18 18" color={CYAN} sw={1.500}>{gear(6)}<circle cx="9" cy="9" r="6.500" className="w" /><path className="f" d="M6 3.500A6 6 0 1 1 6 14.500Q13 9 6 3.500Z" /></Glyph>
            </MoreRow>
          </More>
        </RightTools>
      </Body>
    </Window>
  );
}
